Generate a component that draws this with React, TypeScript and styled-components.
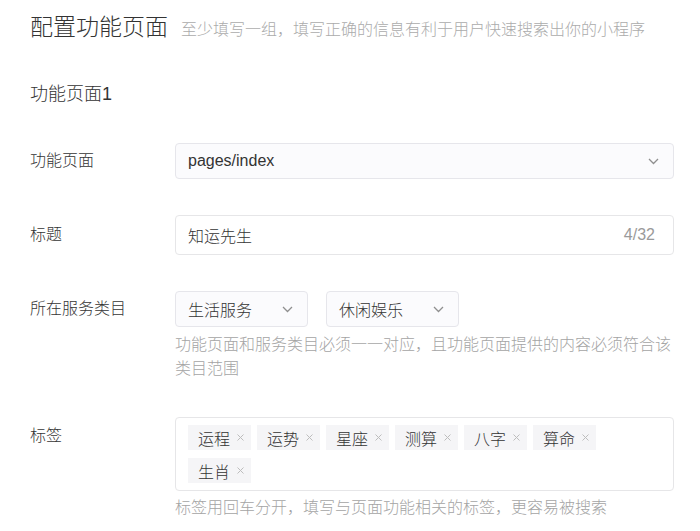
import styled, { createGlobalStyle } from 'styled-components';

const GlobalStyle = createGlobalStyle`
  html, body {
    margin: 0;
    padding: 0;
    background: #ffffff;
  }
  body {
    font-family: "Liberation Sans", "Noto Sans CJK SC", sans-serif;
    font-weight: 300;
    color: #353535;
  }
  * {
    box-sizing: border-box;
  }
`;

const Page = styled.div`
  width: 700px;
  padding: 14px 26px 0 30px;
`;

const Header = styled.div`
  display: flex;
  align-items: baseline;
  gap: 13px;
`;

const Title = styled.h1`
  margin: 0;
  font-size: 23px;
  line-height: 26px;
  font-weight: 300;
  color: #333333;
`;

const Subtitle = styled.span`
  font-size: 16px;
  color: #ababab;
`;

const SectionTitle = styled.h2`
  margin: 42px 0 37px;
  font-size: 18px;
  line-height: 24px;
  font-weight: 300;
  color: #333333;
`;

const Row = styled.div`
  display: grid;
  grid-template-columns: 145px 1fr;
  align-items: start;
  margin-bottom: 36px;
`;

const Label = styled.div<{ $h: number }>`
  font-size: 16px;
  line-height: ${(p) => p.$h}px;
  color: #353535;
`;

const Field = styled.div`
  display: flex;
  flex-direction: column;
`;

const Inline = styled.div`
  display: flex;
  gap: 18px;
`;

const SelectBox = styled.div<{ $w?: number }>`
  display: flex;
  align-items: center;
  justify-content: space-between;
  width: ${(p) => (p.$w ? `${p.$w}px` : '100%')};
  height: 36px;
  padding: 0 14px 0 12px;
  border: 1px solid #e6e6eb;
  border-radius: 4px;
  background: #fbfbfd;
  font-size: 16px;
  color: #333333;
`;

const InputBox = styled.div`
  display: flex;
  align-items: center;
  justify-content: space-between;
  height: 40px;
  padding: 0 18px 0 12px;
  border: 1px solid #e6e6e8;
  border-radius: 4px;
  background: #ffffff;
  font-size: 16px;
  color: #333333;
`;

const Counter = styled.span`
  color: #9a9a9a;
  font-size: 16px;
`;

const Help = styled.p<{ $mt: number }>`
  margin: ${(p) => p.$mt}px 0 0;
  font-size: 16px;
  line-height: 24px;
  color: #a4a4a4;
`;

const TagBox = styled.div`
  display: flex;
  flex-wrap: wrap;
  gap: 8px 6px;
  padding: 7px 12px;
  border: 1px solid #e6e6e8;
  border-radius: 4px;
  background: #ffffff;
`;

const Tag = styled.span`
  display: inline-flex;
  align-items: center;
  gap: 7px;
  height: 25px;
  padding: 0 7px 0 10px;
  background: #f5f5f7;
  font-size: 16px;
  color: #333333;
`;

const Chevron = () => (
  <svg width="11" height="7" viewBox="0 0 11 7" fill="none">
    <path d="M1 1l4.5 4.5L10 1" stroke="#8f8f8f" strokeWidth="1.3" />
  </svg>
);

const Close = () => (
  <svg width="7" height="7" viewBox="0 0 7 7" fill="none">
    <path d="M0.5 0.5l6 6M6.5 0.5l-6 6" stroke="#bdbdbd" strokeWidth="1" />
  </svg>
);

const tags = ['运程', '运势', '星座', '测算', '八字', '算命', '生肖'];

export default function App() {
  return (
    <>
      <GlobalStyle />
      <Page>
        <Header>
          <Title>配置功能页面</Title>
          <Subtitle>至少填写一组，填写正确的信息有利于用户快速搜索出你的小程序</Subtitle>
        </Header>

        <SectionTitle>功能页面1</SectionTitle>

        <Row>
          <Label $h={36}>功能页面</Label>
          <SelectBox>
            <span>pages/index</span>
            <Chevron />
          </SelectBox>
        </Row>

        <Row>
          <Label $h={40}>标题</Label>
          <InputBox>
            <span>知运先生</span>
            <Counter>4/32</Counter>
          </InputBox>
        </Row>

        <Row>
          <Label $h={36}>所在服务类目</Label>
          <Field>
            <Inline>
              <SelectBox $w={133}>
                <span>生活服务</span>
                <Chevron />
              </SelectBox>
              <SelectBox $w={133}>
                <span>休闲娱乐</span>
                <Chevron />
              </SelectBox>
            </Inline>
            <Help $mt={6}>功能页面和服务类目必须一一对应，且功能页面提供的内容必须符合该类目范围</Help>
          </Field>
        </Row>

        <Row>
          <Label $h={38}>标签</Label>
          <Field>
            <TagBox>
              {tags.map((t) => (
                <Tag key={t}>
                  {t}
                  <Close />
                </Tag>
              ))}
            </TagBox>
            <Help $mt={5}>标签用回车分开，填写与页面功能相关的标签，更容易被搜索</Help>
          </Field>
        </Row>
      </Page>
    </>
  );
}
